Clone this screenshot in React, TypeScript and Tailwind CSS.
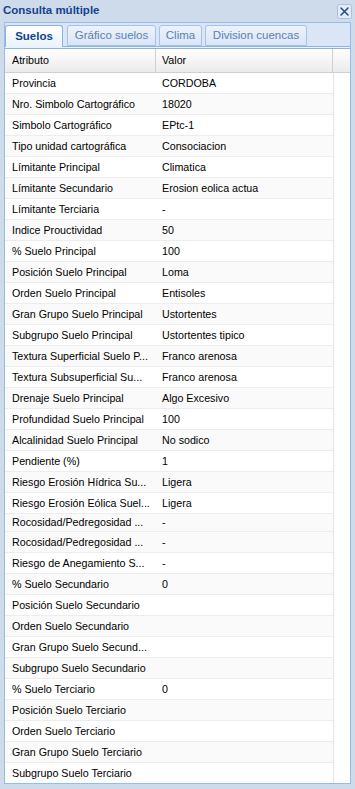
import React from 'react';

type Row = { attr: string; value: string; h?: number };

const rows: Row[] = [
    { attr: 'Provincia', value: 'CORDOBA' },
    { attr: 'Nro. Simbolo Cartográfico', value: '18020' },
    { attr: 'Simbolo Cartográfico', value: 'EPtc-1' },
    { attr: 'Tipo unidad cartográfica', value: 'Consociacion' },
    { attr: 'Límitante Principal', value: 'Climatica' },
    { attr: 'Límitante Secundario', value: 'Erosion eolica actua' },
    { attr: 'Límitante Terciaria', value: '-' },
    { attr: 'Indice Prouctividad', value: '50' },
    { attr: '% Suelo Principal', value: '100' },
    { attr: 'Posición Suelo Principal', value: 'Loma' },
    { attr: 'Orden Suelo Principal', value: 'Entisoles' },
    { attr: 'Gran Grupo Suelo Principal', value: 'Ustortentes' },
    { attr: 'Subgrupo Suelo Principal', value: 'Ustortentes tipico' },
    { attr: 'Textura Superficial Suelo P...', value: 'Franco arenosa' },
    { attr: 'Textura Subsuperficial Su...', value: 'Franco arenosa' },
    { attr: 'Drenaje Suelo Principal', value: 'Algo Excesivo' },
    { attr: 'Profundidad Suelo Principal', value: '100' },
    { attr: 'Alcalinidad Suelo Principal', value: 'No sodico' },
    { attr: 'Pendiente (%)', value: '1' },
    { attr: 'Riesgo Erosión Hídrica Su...', value: 'Ligera' },
    { attr: 'Riesgo Erosión Eólica Suel...', value: 'Ligera' },
    { attr: 'Rocosidad/Pedregosidad ...', value: '-', h: 18 },
    { attr: 'Rocosidad/Pedregosidad ...', value: '-' },
    { attr: 'Riesgo de Anegamiento S...', value: '-' },
    { attr: '% Suelo Secundario', value: '0' },
    { attr: 'Posición Suelo Secundario', value: '' },
    { attr: 'Orden Suelo Secundario', value: '' },
    { attr: 'Gran Grupo Suelo Secund...', value: '' },
    { attr: 'Subgrupo Suelo Secundario', value: '' },
    { attr: '% Suelo Terciario', value: '0' },
    { attr: 'Posición Suelo Terciario', value: '' },
    { attr: 'Orden Suelo Terciario', value: '' },
    { attr: 'Gran Grupo Suelo Terciario', value: '' },
    { attr: 'Subgrupo Suelo Terciario', value: '' },
];

const tabs = [
    { label: 'Suelos', w: 'w-[58px]', ml: 'ml-0', active: true },
    { label: 'Gráfico suelos', w: 'w-[89px]', ml: 'ml-[4px]', active: false },
    { label: 'Clima', w: 'w-[43px]', ml: 'ml-[3px]', active: false },
    { label: 'Division cuencas', w: 'w-[102px]', ml: 'ml-[3px]', active: false },
];

const CloseIcon = () => (
    <svg width="15" height="15" viewBox="0 0 15 15">
        <rect x="0.5" y="0.5" width="14" height="14" rx="2" fill="#e4ecf7" stroke="#a9c0de" />
        <path d="M4 4 L11 11 M11 4 L4 11" stroke="#2a4c8a" strokeWidth="1.6" strokeLinecap="round" />
    </svg>
);

export default function App() {
    return (
        <div className="w-[355px] h-[789px] bg-[#cedbeb] flex flex-col overflow-hidden font-['Liberation_Sans',Arial,sans-serif] text-[10.7px] text-black">
            {/* title */}
            <div className="h-[22px] flex items-center justify-between pl-[3px] pr-[3px] shrink-0">
                <span className="font-bold text-[11.5px] text-[#15428b]">Consulta múltiple</span>
                <CloseIcon />
            </div>

            <div className="mx-[4px] mb-[5px] flex-1 flex flex-col border border-[#99bbe8] min-h-0">
                {/* tab strip */}
                <div className="h-[24px] bg-[#dae6f5] flex items-end border-b border-[#8db2e3] shrink-0">
                    {tabs.map((t) => (
                        <div
                            key={t.label}
                            className={
                                t.active
                                    ? `${t.w} ${t.ml} h-[22px] -mb-px rounded-t-[3px] border border-b-0 border-[#8db2e3] bg-gradient-to-b from-white to-[#eaf2fc] flex items-center justify-center font-bold text-[#15428b] text-[11.5px]`
                                    : `${t.w} ${t.ml} h-[21px] rounded-t-[3px] border border-[#a5c2e8] bg-gradient-to-b from-[#eef3fb] to-[#d9e5f5] flex items-center justify-center text-[#5a7fb5] text-[11.5px]`
                            }
                        >
                            {t.label}
                        </div>
                    ))}
                </div>
                <div className="h-[2px] bg-[#eaf2fc] border-b border-[#8db2e3] shrink-0" />

                {/* grid */}
                <div className="flex-1 bg-white flex flex-col min-h-0 overflow-hidden">
                    <div className="h-[24px] flex shrink-0 bg-gradient-to-b from-white to-[#ebebeb] border-b border-[#d0d0d0]">
                        <div className="w-[151px] pl-[7px] flex items-center border-r border-[#d0d0d0]">Atributo</div>
                        <div className="w-[177px] pl-[6px] flex items-center border-r border-[#d0d0d0]">Valor</div>
                        <div className="flex-1" />
                    </div>
                    <div className="flex flex-1 min-h-0">
                        <div className="w-[328px] flex flex-col">
                            {rows.map((r, i) => {
                                const alt = i < 22 ? i % 2 === 1 : i % 2 === 0;
                                return (
                                    <div
                                        key={i}
                                        className={`flex items-center shrink-0 border-b border-[#ededed] ${r.h ? 'h-[18px]' : 'h-[21px]'} ${alt ? 'bg-[#fafafa]' : 'bg-white'}`}
                                    >
                                        <div className="w-[151px] pl-[7px] whitespace-nowrap overflow-hidden">{r.attr}</div>
                                        <div className="w-[177px] pl-[6px] whitespace-nowrap overflow-hidden">{r.value}</div>
                                    </div>
                                );
                            })}
                        </div>
                        <div className="flex-1 border-l border-[#e4e4e4] bg-white" />
                    </div>
                </div>
            </div>
        </div>
    );
}
